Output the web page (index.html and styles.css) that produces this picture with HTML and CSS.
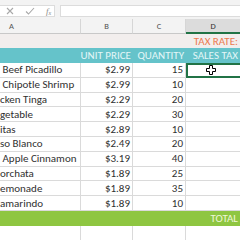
FILE: index.html
```html
<!DOCTYPE html>
<html>
<head>
<meta charset="utf-8">
<link rel="stylesheet" href="styles.css">
</head>
<body>
<div class="fbar">
  <div class="fbox">
    <svg class="ico" width="8" height="8" viewBox="0 0 8 8"><path d="M1 1L7 7M7 1L1 7" stroke="#a8a8a8" stroke-width="1.1" fill="none"/></svg>
    <svg class="ico" width="10" height="8" viewBox="0 0 10 8"><path d="M1 4.5L3.5 7L9 1" stroke="#a8a8a8" stroke-width="1.1" fill="none"/></svg>
    <span class="fx">f<sub>x</sub></span>
  </div>
  <div class="finput"></div>
</div>
<div class="sheet">
  <div class="ch">A</div><div class="ch">B</div><div class="ch">C</div><div class="ch sel">D</div>

  <div class="c r1"></div><div class="c r1"></div><div class="c r1"></div><div class="c r1 tax">TAX RATE:</div>

  <div class="c hd"></div><div class="c hd num">UNIT PRICE</div><div class="c hd num">QUANTITY</div><div class="c hd num">SALES TAX</div>

  <div class="c name">&nbsp;Beef Picadillo</div><div class="c num">$2.99</div><div class="c num">15</div><div class="c active"><svg width="10" height="10" viewBox="0 0 10 10"><path d="M3.5 0.5H6.5V3.5H9.5V6.5H6.5V9.5H3.5V6.5H0.5V3.5H3.5Z" fill="#fff" stroke="#000" stroke-width="1"/></svg></div>
  <div class="c name">&nbsp;Chipotle Shrimp</div><div class="c num">$2.99</div><div class="c num">10</div><div class="c"></div>
  <div class="c name">cken Tinga</div><div class="c num">$2.29</div><div class="c num">20</div><div class="c"></div>
  <div class="c name">getable</div><div class="c num">$2.29</div><div class="c num">30</div><div class="c"></div>
  <div class="c name">itas</div><div class="c num">$2.89</div><div class="c num">10</div><div class="c"></div>
  <div class="c name">so Blanco</div><div class="c num">$2.49</div><div class="c num">20</div><div class="c"></div>
  <div class="c name">&nbsp;Apple Cinnamon</div><div class="c num">$3.19</div><div class="c num">40</div><div class="c"></div>
  <div class="c name">orchata</div><div class="c num">$1.89</div><div class="c num">25</div><div class="c"></div>
  <div class="c name">emonade</div><div class="c num">$1.89</div><div class="c num">35</div><div class="c"></div>
  <div class="c name">amarindo</div><div class="c num">$1.89</div><div class="c num">10</div><div class="c"></div>

  <div class="c tot"></div><div class="c tot"></div><div class="c tot"></div><div class="c tot num">TOTAL</div>

  <div class="c"></div><div class="c"></div><div class="c"></div><div class="c"></div>
</div>
</body>
</html>
```

FILE: styles.css
```css
html, body {
  margin: 0;
  padding: 0;
  width: 240px;
  height: 240px;
  overflow: hidden;
  background: #ffffff;
  font-family: Carlito, Lato, "Liberation Sans", sans-serif;
}
.fbar {
  height: 19px;
  background: #f3f3f3;
  display: flex;
  align-items: flex-start;
  padding-top: 5px;
  box-sizing: border-box;
  gap: 5px;
}
.fbox {
  width: 55px;
  height: 12px;
  background: #fff;
  border: 1px solid #dcdcdc;
  border-left: none;
  box-sizing: border-box;
  display: flex;
  align-items: center;
  padding-left: 6px;
  gap: 11px;
}
.ico { display: block; }
.fx {
  font-family: "Liberation Serif", serif;
  font-style: italic;
  font-size: 9px;
  color: #8a8a8a;
  line-height: 1;
}
.fx sub { font-size: 6px; vertical-align: -1px; }
.finput {
  flex: 1;
  height: 12px;
  background: #fff;
  border: 1px solid #dcdcdc;
  border-right: none;
  box-sizing: border-box;
}
.sheet {
  display: grid;
  grid-template-columns: 81px 52px 53px 54px;
  grid-template-rows: 15px 14px 15px repeat(10, 14.8px) 15px 15px;
}
.ch {
  background: #f3f3f3;
  border-right: 1px solid #d6d6d6;
  border-bottom: 1px solid #c8c8c8;
  font-size: 8.5px;
  color: #555;
  display: flex;
  align-items: center;
  justify-content: center;
}
.ch:first-child { justify-content: flex-start; padding-left: 9px; }
.ch.sel {
  background: #dcdcdc;
  border-bottom: 2px solid #217346;
  border-right: none;
  color: #333;
}
.c {
  border-right: 1px solid #dadada;
  border-bottom: 1px solid #dadada;
  font-size: 11px;
  color: #303030;
  display: flex;
  align-items: center;
  white-space: nowrap;
  overflow: hidden;
  padding: 0 2px;
  box-sizing: border-box;
}
.c:nth-child(4n) { border-right: none; }
.name { padding-left: 0; }
.num { justify-content: flex-end; }
.r1 { background: #f2eeed; border-right-color: #f2eeed; border-bottom: none; }
.tax { color: #ec7a4f; justify-content: flex-end; overflow: visible; }
.hd {
  background: #65c3ca;
  color: #e3f6f7;
  border-right: none;
  border-bottom: none;
  overflow: visible;
}
.tot {
  background: #8ec641;
  color: #eef7d8;
  border-right: none;
  border-bottom: none;
}
.active {
  border: 2px solid #217346;
  border-right: none;
  justify-content: center;
  padding-left: 0;
  padding-right: 6px;
}
.active svg { display: block; }
```
